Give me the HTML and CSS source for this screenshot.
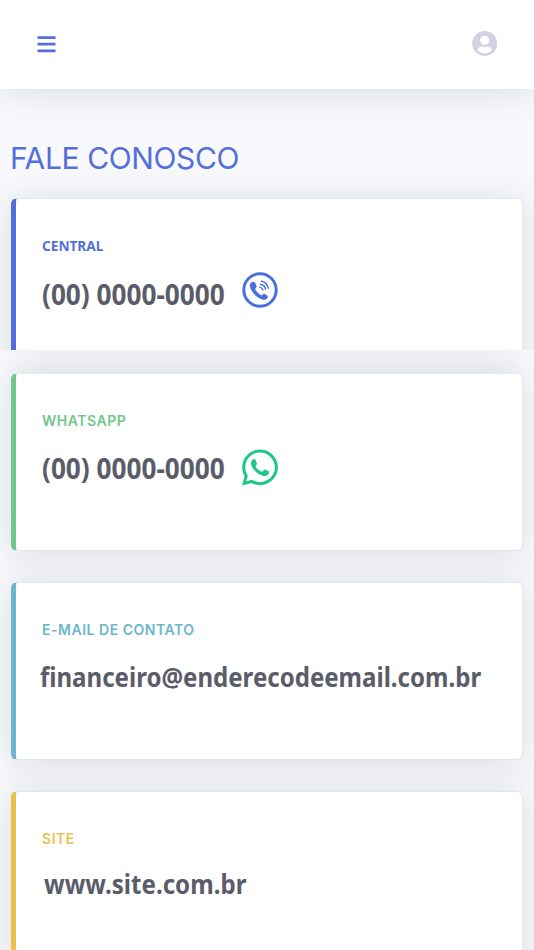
FILE: index.html
```
<!DOCTYPE html>
<html lang="pt-br">
<head>
<meta charset="utf-8">
<title>Fale conosco</title>
<link rel="stylesheet" href="styles.css">
</head>
<body>

<header class="topbar">
	<svg class="menu" viewBox="0 0 19 17" width="19" height="17"><path d="M.5 1.6h18M.5 8.2h18M.5 14.8h18"/></svg>
	<svg class="user" viewBox="0 0 26 26" width="26" height="26"><circle cx="12.700" cy="12.500" r="12.500"/><circle class="cut" cx="12.700" cy="9.300" r="4.600"/><path class="cut" d="M5.300 18.700c1.200-2.300 3-3.300 5.200-3.100 1.500.4 2.900.4 4.400 0 2.200-.2 4 .8 5.200 3.100-1.800 2.500-4.500 3.600-7.400 3.600s-5.600-1.100-7.400-3.600z"/></svg>
</header>

<main>
	<section class="intro">
		<h1>FALE CONOSCO</h1>
		<div class="card central">
			<h2>CENTRAL</h2>
			<div class="value">
				<p class="phone">(00) 0000-0000</p>
				<svg class="icon call" viewBox="0 0 36 36" width="36" height="36">
					<circle cx="18" cy="18" r="16.200"/>
					<path class="fill" d="M9.200 10.600c1.300-1.200 3-1.200 3.900.2l1.300 2.400c.6 1.300.2 2-.8 3.100-.5.6-.4 1.100 0 1.700 1.300 2.100 3 3.800 5.200 5 .7.400 1.200.3 1.700-.3.900-1 1.600-1.200 2.700-.5l2 1.300c1 .8.900 1.900.1 2.800-1.200 1.400-3.100 2-5 1.300-5.900-2-10.200-6.600-12.200-12.300-.6-1.800-.2-3.500 1.100-4.700z"/>
					<path class="wave" d="M19.300 9.200q5.800.6 6.900 7M18.500 12.200q4.100.7 5.100 4.900M17.700 15.100q2.300.6 3.200 2.800"/>
				</svg>
			</div>
		</div>
	</section>

	<section class="contacts">
		<div class="card whatsapp">
			<h2>WHATSAPP</h2>
			<div class="value">
				<p class="phone">(00) 0000-0000</p>
				<svg class="icon" viewBox="0 0 448 512" width="36" height="41"><path d="M380.900 97.100C339 55.100 283.200 32 223.900 32c-122.400 0-222 99.600-222 222 0 39.100 10.200 77.300 29.600 111L0 480l117.700-30.900c32.400 17.700 68.900 27 106.100 27h.1c122.300 0 224.100-99.600 224.100-222 0-59.300-25.200-115-67.100-157zm-157 341.600c-33.200 0-65.700-8.900-94-25.700l-6.700-4-69.800 18.300L72 359.200l-4.400-7c-18.500-29.400-28.200-63.300-28.200-98.200 0-101.700 82.800-184.500 184.600-184.500 49.300 0 95.600 19.200 130.400 54.100 34.800 34.900 56.200 81.200 56.100 130.500 0 101.800-84.900 184.600-186.600 184.600z"/><path d="M325.100 300.500c-5.500-2.800-32.800-16.200-37.900-18-5.100-1.900-8.800-2.800-12.500 2.800-3.700 5.600-14.300 18-17.600 21.800-3.200 3.700-6.500 4.200-12 1.400-32.600-16.300-54-29.100-75.500-66-5.700-9.800 5.700-9.100 16.300-30.300 1.800-3.700.9-6.900-.5-9.700-1.400-2.800-12.500-30.100-17.100-41.200-4.500-10.800-9.100-9.300-12.500-9.500-3.200-.2-6.900-.2-10.600-.2-3.700 0-9.700 1.400-14.800 6.900-5.100 5.600-19.400 19-19.400 46.300 0 27.300 19.900 53.700 22.600 57.400 2.800 3.700 39.100 59.700 94.800 83.800 35.200 15.200 49 16.500 66.600 13.900 10.700-1.600 32.800-13.400 37.400-26.400 4.600-13 4.600-24.100 3.200-26.400-1.300-2.500-5-3.900-10.500-6.600z"/></svg>
			</div>
		</div>

		<div class="card email">
			<h2>E-MAIL DE CONTATO</h2>
			<p>financeiro@enderecodeemail.com.br</p>
		</div>

		<div class="card site">
			<h2>SITE</h2>
			<p>www.site.com.br</p>
		</div>
	</section>
</main>

</body>
</html>
```

FILE: styles.css
```
* { box-sizing: border-box; }

body {
	margin: 0;
	height: 950px;
	overflow: hidden;
	background: #f8f9fd;
	font-family: Inter, "Liberation Sans", sans-serif;
	color: #5a5c69;
}

h1, h2, p { margin: 0; }
svg { display: block; flex: none; }

.topbar {
	position: relative;
	z-index: 1;
	display: flex;
	justify-content: space-between;
	height: 89px;
	padding: 31px 36px 0 37px;
	background: #fff;
	box-shadow: 0 3px 36px rgba(58,59,69,0.15);
}
.menu { margin-top: 5px; fill: none; stroke: #546fdb; stroke-width: 2.8; }
.user { fill: #d1d3e2; }
.user .cut { fill: #fff; }

.intro {
	height: 261px;
	overflow: hidden;
	padding: 49px 11px 0;
}
.contacts {
	display: grid;
	grid-template-columns: minmax(0, 1fr);
	align-content: start;
	gap: 31px;
	padding: 23px 11px 0;
	height: 600px;
	overflow: hidden;
	background: linear-gradient(to right, transparent, rgba(58,59,69,0.03) 40px, rgba(58,59,69,0.03) 494px, transparent) 0 0 / 100% 24px no-repeat;
}

h1 {
	height: 60px;
	margin-left: -1px;
	font-size: 30px;
	line-height: 41px;
	font-weight: 400;
	letter-spacing: -0.38px;
	color: #546fdb;
}

.card {
	height: 178px;
	padding: 37px 0 0 26px;
	background: #fff;
	border: 1px solid #e3e6f0;
	border-left: 5px solid;
	border-radius: 6px;
	box-shadow: 0 3px 36px rgba(58,59,69,0.15);
}
.card h2 {
	font-size: 14px;
	line-height: 20px;
	font-weight: 600;
	letter-spacing: 0.52px;
}
.card p {
	font: bold 27px/40px "Noto Sans", "Open Sans", sans-serif;
	white-space: nowrap;
	transform-origin: 0 0;
}

.value { display: flex; height: 60px; }
.value .phone {
	width: 200px;
	margin-top: 18px;
	font-size: 28px;
	transform: scaleX(0.935);
}

/* the phone font is used for the label too */
.central { border-left-color: #546fdb; }
.central h2 {
	font: bold 14.500px/18px "Noto Sans", sans-serif;
	padding-bottom: 2px;
	letter-spacing: 0;
	color: #546fdb;
	transform: scaleX(0.94);
	transform-origin: 0 0;
}
.whatsapp { border-left-color: #71c78c; }
.whatsapp h2 { color: #71c78c; }
.whatsapp .phone { margin-top: 17px; }
.email { border-left-color: #6bb6cb; }
.email h2 { color: #6bb6cb; }
.email p { margin: 17px 0 0 -2px; transform: scaleX(0.891); }
.site { border-left-color: #e9c04c; }
.site h2 { color: #e9c04c; }
.site p { margin: 15px 0 0 2px; transform: scaleX(0.893); }

.icon { fill: #1bc982; }
.icon.call { fill: none; stroke: #4a70df; stroke-width: 3; margin-top: 16px; }
.call .fill { fill: #4a70df; stroke: none; }
.call .wave { stroke-width: 1.4; stroke-linecap: round; }
.whatsapp .icon { margin-top: 16px; }
```
